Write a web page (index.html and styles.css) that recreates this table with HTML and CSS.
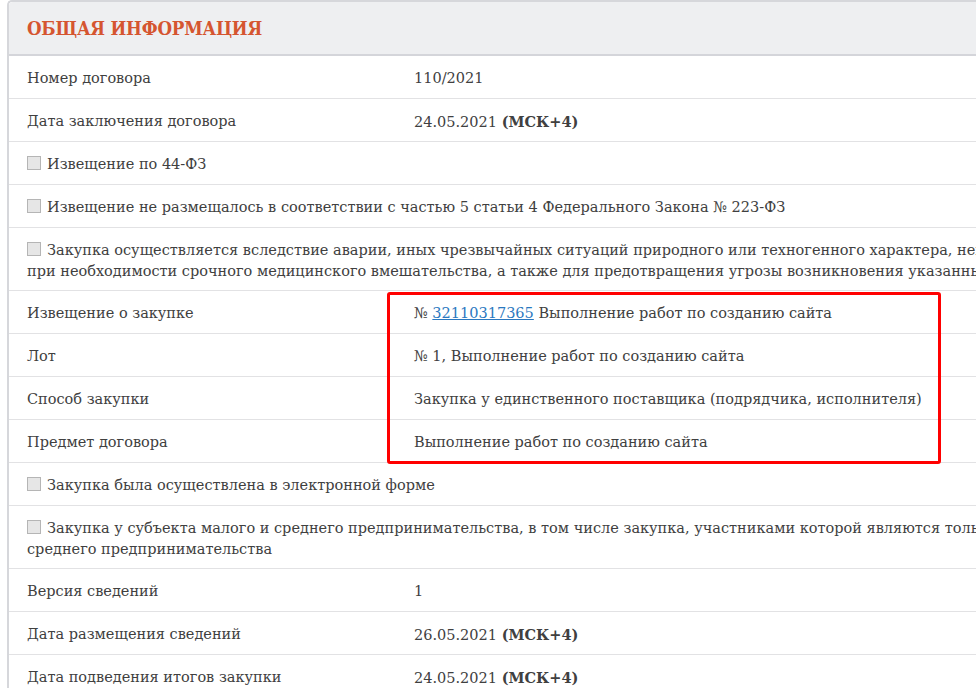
FILE: index.html
```html
<!DOCTYPE html>
<html lang="ru">
<head>
<meta charset="utf-8">
<title>Общая информация</title>
<link rel="stylesheet" href="styles.css">
</head>
<body>
<div class="page">
  <section class="card">
    <header class="card-head"><h2 class="card-title">Общая информация</h2></header>
    <div class="row"><div class="label">Номер договора</div><div class="value">110/2021</div></div>
    <div class="row"><div class="label">Дата заключения договора</div><div class="value">24.05.2021 <b>(МСК+4)</b></div></div>
    <div class="row full"><span class="line"><span class="check"></span>Извещение по 44-ФЗ</span></div>
    <div class="row full"><span class="line"><span class="check"></span>Извещение не размещалось в соответствии с частью 5 статьи 4 Федерального Закона № 223-ФЗ</span></div>
    <div class="row full tall"><span class="line"><span class="check"></span>Закупка осуществляется вследствие аварии, иных чрезвычайных ситуаций природного или техногенного характера, непреодолимой силы,</span><span class="line">при необходимости срочного медицинского вмешательства, а также для предотвращения угрозы возникновения указанных ситуаций</span></div>
    <div class="row"><div class="label">Извещение о закупке</div><div class="value">№ <a href="#" class="link">32110317365</a> Выполнение работ по созданию сайта</div></div>
    <div class="row"><div class="label">Лот</div><div class="value">№ 1, Выполнение работ по созданию сайта</div></div>
    <div class="row"><div class="label">Способ закупки</div><div class="value">Закупка у единственного поставщика (подрядчика, исполнителя)</div></div>
    <div class="row"><div class="label">Предмет договора</div><div class="value">Выполнение работ по созданию сайта</div></div>
    <div class="row full"><span class="line"><span class="check"></span>Закупка была осуществлена в электронной форме</span></div>
    <div class="row full tall"><span class="line"><span class="check"></span>Закупка у субъекта малого и среднего предпринимательства, в том числе закупка, участниками которой являются только субъекты малого и</span><span class="line">среднего предпринимательства</span></div>
    <div class="row"><div class="label">Версия сведений</div><div class="value">1</div></div>
    <div class="row"><div class="label">Дата размещения сведений</div><div class="value">26.05.2021 <b>(МСК+4)</b></div></div>
    <div class="row"><div class="label">Дата подведения итогов закупки</div><div class="value">24.05.2021 <b>(МСК+4)</b></div></div>
  </section>
  <div class="highlight"></div>
</div>
</body>
</html>
```

FILE: styles.css
```css
html, body {
  margin: 0;
  padding: 0;
  background: #fff;
  overflow: hidden;
}
.page {
  position: relative;
  width: 976px;
  height: 688px;
  overflow: hidden;
  font-family: "DejaVu Serif", "Liberation Serif", serif;
  font-size: 14.5px;
  color: #404040;
}
.card {
  margin-left: 7px;
  width: 1300px;
  border-left: 2px solid #d6d7db;
  border-top: 2px solid #d6d7db;
  border-top-left-radius: 5px;
}
.card-head {
  background: #eeeff1;
  border-bottom: 2px solid #d4d5da;
  height: 52px;
  display: flex;
  align-items: center;
  padding-left: 18px;
  border-top-left-radius: 4px;
}
.card-title {
  margin: 0;
  font-family: "DejaVu Serif Condensed", "DejaVu Serif", serif;
  font-stretch: condensed;
  font-size: 18.6px;
  font-weight: bold;
  text-transform: uppercase;
  color: #d55530;
  letter-spacing: -0.2px;
}
.row {
  box-sizing: border-box;
  height: 43px;
  display: grid;
  grid-template-columns: 387px 1fr;
  padding: 12px 0 0 18px;
  line-height: 21px;
  border-bottom: 1px solid #e2e2e4;
  overflow: hidden;
}
.row.tall {
  height: 63px;
}
.row.full {
  display: block;
}
.line {
  display: block;
  height: 21px;
  white-space: nowrap;
}
.check {
  display: inline-block;
  width: 12px;
  height: 12px;
  border: 1px solid #b5b5b5;
  background: #e6e6e6;
  vertical-align: -1px;
  margin-right: 6px;
}
.value b {
  font-weight: bold;
  color: #404040;
}
.link {
  color: #2a78c0;
  text-decoration: underline;
}
.highlight {
  position: absolute;
  left: 387px;
  top: 292px;
  width: 548px;
  height: 166px;
  border: 3px solid #ff0000;
  border-radius: 3px;
}
```
